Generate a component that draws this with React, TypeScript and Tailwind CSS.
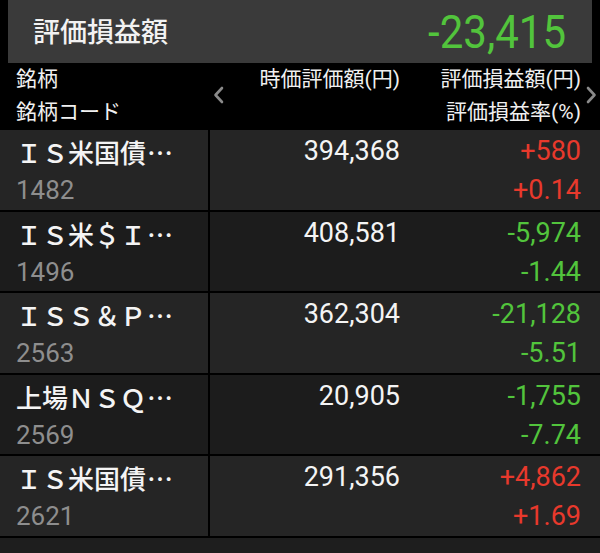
import React from "react";

const NUM = { fontFamily: "Roboto, 'Noto Sans CJK JP', sans-serif" };
const CJK = { fontFamily: "'Noto Sans CJK JP', Roboto, sans-serif" };

type Row = { name: string; code: string; value: string; pl: string; rate: string; up: boolean };

const rows: Row[] = [
  { name: "ＩＳ米国債", code: "1482", value: "394,368", pl: "+580", rate: "+0.14", up: true },
  { name: "ＩＳ米＄Ｉ", code: "1496", value: "408,581", pl: "-5,974", rate: "-1.44", up: false },
  { name: "ＩＳＳ＆Ｐ", code: "2563", value: "362,304", pl: "-21,128", rate: "-5.51", up: false },
  { name: "上場ＮＳＱ", code: "2569", value: "20,905", pl: "-1,755", rate: "-7.74", up: false },
  { name: "ＩＳ米国債", code: "2621", value: "291,356", pl: "+4,862", rate: "+1.69", up: true },
];

function Chevron({ dir }: { dir: "l" | "r" }) {
  return (
    <svg width="11" height="18" viewBox="0 0 11 18" fill="none">
      {dir === "l" ? (
        <path d="M9 2 L2.5 9 L9 16" stroke="#8a8a8a" strokeWidth="2.6" strokeLinecap="round" strokeLinejoin="round" />
      ) : (
        <path d="M2 2 L8.5 9 L2 16" stroke="#8a8a8a" strokeWidth="2.6" strokeLinecap="round" strokeLinejoin="round" />
      )}
    </svg>
  );
}

export default function App() {
  return (
    <div className="w-[600px] h-[553px] bg-black overflow-hidden flex flex-col" style={NUM}>
      <div className="mx-[8px] h-[63px] bg-[#3a3a3a] flex items-center justify-between pl-[25px] pr-[26px] shrink-0">
        <span className="text-[27px] text-[#f2f2f2] font-medium" style={CJK}>評価損益額</span>
        <span className="text-[42px] text-[#52c43c] leading-none scale-y-[1.12] pt-[1px]">-23,415</span>
      </div>
      <div className="h-[67px] flex shrink-0 text-[21px] text-[#f0f0f0] leading-[33px]">
        <div className="w-[208px] pl-[16px] flex flex-col">
          <span>銘柄</span>
          <span>銘柄コード</span>
        </div>
        <div className="w-[14px] flex items-center justify-center pb-[3px] ml-[3px]">
          <Chevron dir="l" />
        </div>
        <div className="w-[175px] flex flex-col items-end">
          <span>時価評価額(円)</span>
        </div>
        <div className="w-[181px] flex flex-col items-end">
          <span>評価損益額(円)</span>
          <span>評価損益率(%)</span>
        </div>
        <div className="flex-1 flex items-center justify-end pr-[3px] pb-[3px]">
          <Chevron dir="r" />
        </div>
      </div>
      <div className="flex flex-col">
        {rows.map((r, i) => {
          const bg = i % 2 === 0 ? "bg-[#252525]" : "bg-[#1c1c1c]";
          const c = r.up ? "text-[#e8392c]" : "text-[#52c43c]";
          return (
            <div key={i} className="flex h-[81.6px] border-b-2 border-black">
              <div className={`w-[208px] ${bg} pl-[16px] pt-[2px] flex flex-col`}>
                <span className="h-[39px] leading-[39px] text-[26px] text-[#f4f4f4] font-medium whitespace-nowrap" style={CJK}>
                  {r.name}
                  <span className="inline-block w-[28px] text-center">⋯</span>
                </span>
                <span className="h-[39px] leading-[39px] text-[26px] text-[#8e8e8e]">{r.code}</span>
              </div>
              <div className="w-[2px] bg-black" />
              <div className={`flex-1 ${bg} pt-[2px] flex`}>
                <div className="w-[190px] flex flex-col items-end">
                  <span className="h-[39px] leading-[39px] text-[27px] text-[#f4f4f4]">{r.value}</span>
                </div>
                <div className="w-[181px] flex flex-col items-end">
                  <span className={`h-[39px] leading-[39px] text-[27px] ${c}`}>{r.pl}</span>
                  <span className={`h-[39px] leading-[39px] text-[27px] ${c}`}>{r.rate}</span>
                </div>
              </div>
            </div>
          );
        })}
      </div>
      <div className="flex-1 bg-[#1e1e1e]" />
    </div>
  );
}
